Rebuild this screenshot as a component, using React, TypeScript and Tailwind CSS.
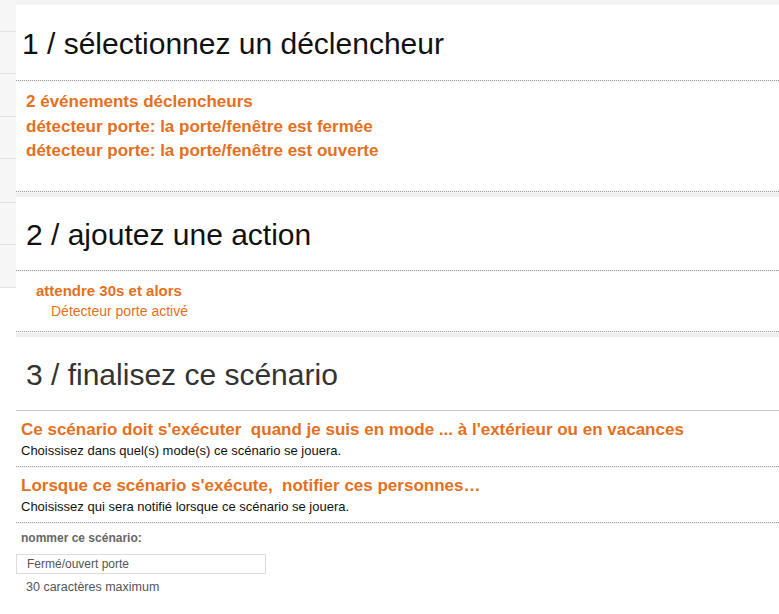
const ORANGE = "text-[#e4701e]";

function SideStrip() {
  return (
    <div className="w-[16px] shrink-0">
      <div className="flex h-[288px] flex-col bg-[#f6f6f6]">
        <div className="h-[32px] border-b border-[#e2e2e2]" />
        <div className="h-[42px] border-b border-[#e2e2e2]" />
        <div className="h-[43px] border-b border-[#e2e2e2]" />
        <div className="h-[42px] border-b border-[#e2e2e2]" />
        <div className="h-[44px] border-b border-[#e2e2e2]" />
        <div className="h-[42px] border-b border-[#e2e2e2]" />
        <div className="h-[43px] border-b border-[#e2e2e2]" />
      </div>
    </div>
  );
}

function Dotted() {
  return <div className="h-[2px] border-t border-dotted border-[#9a9a9a] bg-[#f7f7f7]" />;
}

export default function App() {
  return (
    <div className="flex h-[614px] w-[779px] overflow-hidden bg-white font-['Liberation_Sans',Arial,sans-serif]">
      <SideStrip />
      <div className="flex min-w-0 flex-1 flex-col">
        <div className="h-[5px] bg-[#f3f3f3]" />

        {/* step 1 */}
        <section className="bg-white">
          <h2 className="flex h-[75px] items-center pl-[6px] pt-[2px] text-[30px] leading-none text-[#111]">
            1 / sélectionnez un déclencheur
          </h2>
          <Dotted />
          <div className={`flex flex-col gap-[4.5px] pl-[10px] pt-[10px] text-[17px] font-bold leading-[20px] ${ORANGE}`}>
            <p>2 événements déclencheurs</p>
            <p>détecteur porte: la porte/fenêtre est fermée</p>
            <p>détecteur porte: la porte/fenêtre est ouverte</p>
          </div>
          <div className="h-[30px]" />
          <Dotted />
        </section>
        <div className="h-[4px] bg-[#efefef]" />

        {/* step 2 */}
        <section className="bg-white">
          <h2 className="flex h-[73px] items-center pl-[10px] pt-[2px] text-[30px] leading-none text-[#111]">
            2 / ajoutez une action
          </h2>
          <Dotted />
          <div className={`pl-[20px] pt-[9px] leading-[20px] ${ORANGE}`}>
            <p className="text-[15px] font-bold">attendre 30s et alors</p>
            <p className="pl-[15px] text-[14px]">Détecteur porte activé</p>
          </div>
          <div className="h-[10px]" />
          <Dotted />
        </section>
        <div className="h-[4px] bg-[#efefef]" />

        {/* step 3 */}
        <section className="bg-white">
          <h2 className="flex h-[73px] items-center pl-[10px] pt-[2px] text-[30px] leading-none text-[#333]">
            3 / finalisez ce scénario
          </h2>
          <div className="border-t border-[#c8c8c8]" />
          <div className="px-[5px] pb-[7px] pt-[9px]">
            <p className={`text-[17px] font-bold leading-[20px] ${ORANGE}`}>
              Ce scénario doit s'exécuter&nbsp; quand je suis en mode ... à l'extérieur ou en vacances
            </p>
            <p className="mt-[3px] text-[13px] leading-[16px] text-[#111]">
              Choissisez dans quel(s) mode(s) ce scénario se jouera.
            </p>
          </div>
          <Dotted />
          <div className="px-[5px] pb-[7px] pt-[8px]">
            <p className={`text-[17px] font-bold leading-[20px] ${ORANGE}`}>
              Lorsque ce scénario s'exécute,&nbsp; notifier ces personnes…
            </p>
            <p className="mt-[3px] text-[13px] leading-[16px] text-[#111]">
              Choisissez qui sera notifié lorsque ce scénario se jouera.
            </p>
          </div>
          <Dotted />
          <div className="pt-[6px]">
            <p className="pl-[5px] text-[12px] font-bold leading-[16px] text-[#666]">nommer ce scénario:</p>
            <div className="mt-[8px] flex h-[20px] w-[250px] items-center border border-[#dcdcdc] pl-[10px] text-[12px] text-[#555]">
              Fermé/ouvert porte
            </div>
            <p className="pl-[10px] pt-[5px] text-[12.5px] leading-[16px] text-[#555]">30 caractères maximum</p>
          </div>
        </section>
      </div>
    </div>
  );
}
